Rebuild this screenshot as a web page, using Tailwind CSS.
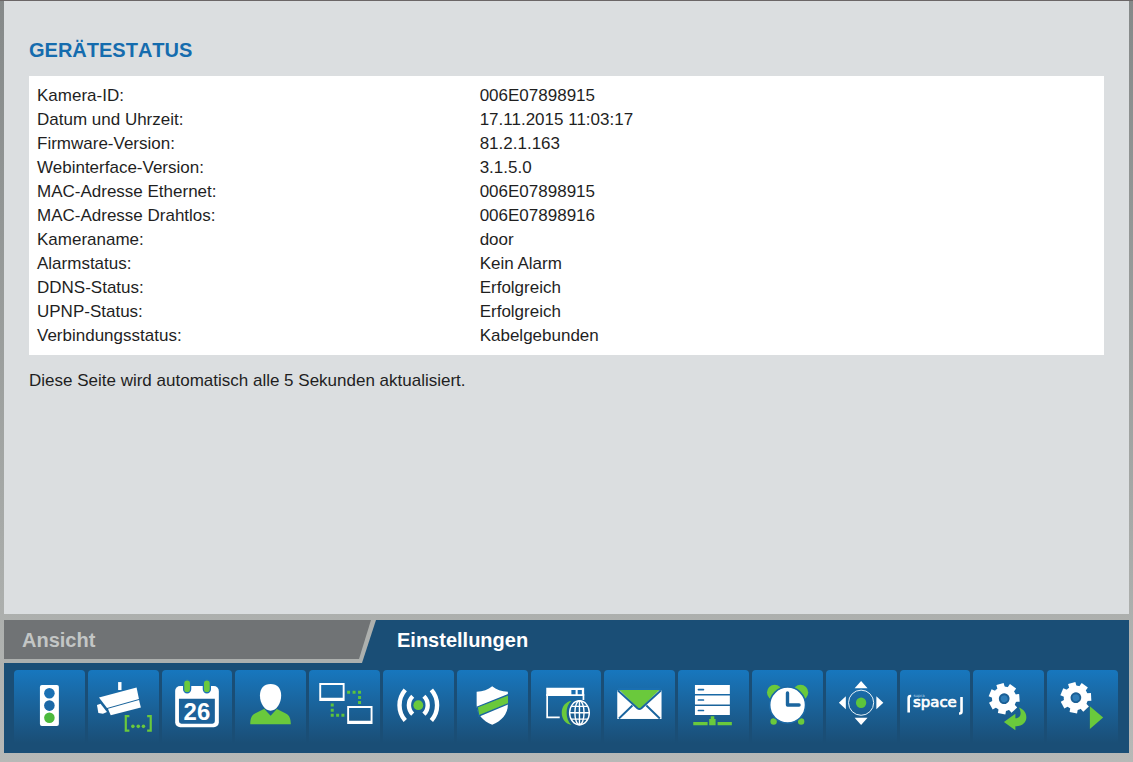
<!DOCTYPE html>
<html lang="de">
<head>
<meta charset="utf-8">
<meta name="viewport" content="width=device-width, initial-scale=1">
<title>Gerätestatus</title>
<script src="https://cdn.jsdelivr.net/npm/@tailwindcss/browser@4"></script>
</head>
<body class="flex min-h-screen flex-col border-t border-[#6b6667] bg-linear-to-b from-[#858989] from-0% via-[#a7aaa8] via-70% to-[#b7b9b7] px-1 pb-[9px] font-['Liberation_Sans',Arial,sans-serif] text-[17px] leading-6 text-[#1f1f1f]">
<svg class="hidden" aria-hidden="true">
  <symbol id="gear" viewBox="-16 -16 32 32">
    <g stroke="#fff" stroke-width="7.6">
      <path d="M0 0V-15.3"/>
      <path d="M0 0V-15.3" transform="rotate(51.43)"/>
      <path d="M0 0V-15.3" transform="rotate(102.86)"/>
      <path d="M0 0V-15.3" transform="rotate(154.29)"/>
      <path d="M0 0V-15.3" transform="rotate(205.71)"/>
      <path d="M0 0V-15.3" transform="rotate(257.14)"/>
      <path d="M0 0V-15.3" transform="rotate(308.57)"/>
    </g>
    <circle r="12.2" fill="#fff"/>
    <circle r="4.4" fill="#2f7db8" stroke="#1b5f95" stroke-width="2"/>
  </symbol>
</svg>

<main class="flex-1 bg-[#dbdee0] px-[25px] pt-[35px]">
  <h1 class="text-xl leading-7 font-bold text-[#156cae] [font-kerning:none]">GERÄTESTATUS</h1>
  <div class="mt-3 bg-white px-2 pt-2 pb-[7px]">
    <table class="w-full table-fixed text-left">
      <tbody>
        <tr><th scope="row" class="w-[41.8%] font-normal">Kamera-ID:</th><td>006E07898915</td></tr>
        <tr><th scope="row" class="font-normal">Datum und Uhrzeit:</th><td>17.11.2015 11:03:17</td></tr>
        <tr><th scope="row" class="font-normal">Firmware-Version:</th><td>81.2.1.163</td></tr>
        <tr><th scope="row" class="font-normal">Webinterface-Version:</th><td>3.1.5.0</td></tr>
        <tr><th scope="row" class="font-normal">MAC-Adresse Ethernet:</th><td>006E07898915</td></tr>
        <tr><th scope="row" class="font-normal">MAC-Adresse Drahtlos:</th><td>006E07898916</td></tr>
        <tr><th scope="row" class="font-normal">Kameraname:</th><td>door</td></tr>
        <tr><th scope="row" class="font-normal">Alarmstatus:</th><td>Kein Alarm</td></tr>
        <tr><th scope="row" class="font-normal">DDNS-Status:</th><td>Erfolgreich</td></tr>
        <tr><th scope="row" class="font-normal">UPNP-Status:</th><td>Erfolgreich</td></tr>
        <tr><th scope="row" class="font-normal">Verbindungsstatus:</th><td>Kabelgebunden</td></tr>
      </tbody>
    </table>
  </div>
  <p class="mt-3.5">Diese Seite wird automatisch alle 5 Sekunden aktualisiert.</p>
</main>

<footer class="mt-1.5 bg-[#1a4e76]">
  <div class="flex text-xl leading-10 font-bold">
    <div class="w-[372px] shrink-0 bg-[#adb0ae] pb-1 [clip-path:polygon(0_0,100%_0,calc(100%_-_14px)_100%,0_100%)]">
      <button type="button" class="block h-[39px] w-[367px] bg-[#707375] pl-[18px] text-left text-[#c3c6c5] [clip-path:polygon(0_0,100%_0,calc(100%_-_12px)_100%,0_100%)]">Ansicht</button>
    </div>
    <button type="button" class="h-[39px] pl-[21px] text-white">Einstellungen</button>
  </div>
  <nav class="flex gap-[3px] pt-[7px] pr-[11px] pb-2.5 pl-2.5" aria-label="Einstellungen">
    <button type="button" aria-label="Status" class="h-[73px] flex-1 rounded-t bg-linear-to-b from-[#1777be] to-[#1a4e76]">
      <svg viewBox="0 0 71 73" class="h-full w-full">
        <rect x="26" y="15" width="19" height="41" rx="2" fill="#fff"/>
        <circle cx="35.5" cy="23.3" r="5.3" fill="#1a70b3"/><circle cx="35.5" cy="35.6" r="5.3" fill="#1b68a6"/><circle cx="35.5" cy="47.8" r="5.3" fill="#4cb93c"/>
      </svg>
    </button>
    <button type="button" aria-label="Kamera" class="h-[73px] flex-1 rounded-t bg-linear-to-b from-[#1777be] to-[#1a4e76]">
      <svg viewBox="0 0 71 73" class="h-full w-full">
        <g fill="#fff"><path d="M30.2 12h3.4v8h-3.4z"/><path d="M11 27.4 48.7 17.400l2.400 11.500-32 9z"/><path d="m20 38.800 31.200-8.800 1.800 7.400L22.800 45.200z"/><path d="m9 35 3.600-1.200L19 42l-4 1.700-4.600-.8z"/></g>
        <g fill="none" stroke="#6ac93c" stroke-width="2.2"><path d="M41.5 46.2h-3.6v14.4h3.6M59.3 46.2h3.6v14.4h-3.6"/></g>
        <g fill="#6ac93c"><circle cx="45" cy="56.4" r="1.8"/><circle cx="50.4" cy="56.4" r="1.8"/><circle cx="55.6" cy="56.4" r="1.8"/></g>
      </svg>
    </button>
    <button type="button" aria-label="Datum" class="h-[73px] flex-1 rounded-t bg-linear-to-b from-[#1777be] to-[#1a4e76]">
      <svg viewBox="0 0 71 73" class="h-full w-full font-['Liberation_Sans_Narrow','Liberation_Sans',sans-serif]">
        <rect x="13.2" y="16" width="43.8" height="41.3" rx="5" fill="#fff"/>
        <path d="M17 28.7h36v22.6a2.5 2.5 0 0 1-2.5 2.5h-31a2.5 2.5 0 0 1-2.5-2.5z" fill="#1c629a"/>
        <g fill="#6ac93c" stroke="#1a72b5" stroke-width="1.3"><rect x="21.7" y="9.7" width="7" height="13" rx="3.5"/><rect x="41.5" y="9.7" width="7" height="13" rx="3.5"/></g>
        <text x="35" y="50" text-anchor="middle" font-size="24" font-weight="700" fill="#fff">26</text>
      </svg>
    </button>
    <button type="button" aria-label="Benutzer" class="h-[73px] flex-1 rounded-t bg-linear-to-b from-[#1777be] to-[#1a4e76]">
      <svg viewBox="0 0 71 73" class="h-full w-full">
        <path d="M15.3 54.4c0-7 1.8-9.6 5.7-11.5l9-4.3h11l9 4.3c4 1.900 6 4.500 6 11.500z" fill="#6ac93c"/>
        <path d="M29 38.5h13.400l-6.700 7.200z" fill="#1b5f96"/>
        <path d="M35.700 14c6.800 0 10.600 4.500 10.600 11.500 0 8-4.800 15.200-10.600 15.200S25 33.500 25 25.500C25 18.500 29 14 35.700 14z" fill="#fff"/>
      </svg>
    </button>
    <button type="button" aria-label="Netzwerk" class="h-[73px] flex-1 rounded-t bg-linear-to-b from-[#1777be] to-[#1a4e76]">
      <svg viewBox="0 0 71 73" class="h-full w-full">
        <path fill-rule="evenodd" fill="#fff" d="M10.300 13h25.400v18H10.300zM12.200 14.900v12.800h21.600V14.900zM38.300 36h25.400v18H38.300zM40.200 37.900v12.800h21.600V37.900z"/>
        <path d="M38.200 20.800h3v3h-3zM43.700 20.800h3v3h-3zM49.200 20.800h3v3h-3zM49.200 26h3v3h-3zM49.200 31h3v3h-3zM21.800 33.500h3v3h-3zM21.800 38.700h3v3h-3zM21.800 43.800h3v3h-3zM27.200 43.800h3v3h-3zM32.500 43.800h3v3h-3z" fill="#5cc43c"/>
      </svg>
    </button>
    <button type="button" aria-label="WLAN" class="h-[73px] flex-1 rounded-t bg-linear-to-b from-[#1777be] to-[#1a4e76]">
      <svg viewBox="0 0 71 73" class="h-full w-full">
        <circle cx="35.400" cy="35.200" r="4.900" fill="#6ac93c"/>
        <g fill="none" stroke="#fff" stroke-width="4.400"><path d="M29.800 26.200a12.500 12.500 0 0 0 0 18M41 26.200a12.500 12.500 0 0 1 0 18"/><path d="M22.300 19.800a23.500 23.500 0 0 0 0 30.800M48.500 19.800a23.500 23.500 0 0 1 0 30.800"/></g>
      </svg>
    </button>
    <button type="button" aria-label="Sicherheit" class="h-[73px] flex-1 rounded-t bg-linear-to-b from-[#1777be] to-[#1a4e76]">
      <svg viewBox="0 0 71 73" class="h-full w-full">
        <path d="M35.300 16.300c4 3.500 9.500 5.400 15.700 5.400v13c0 9.500-6.500 16.500-15.700 20-9.200-3.500-15.600-10.500-15.600-20v-13c6.200 0 11.600-1.900 15.600-5.400z" fill="#fff"/>
        <path d="m20.300 37 31.500-12.500v9L21.800 46z" fill="#6ac93c" stroke="#1b659f" stroke-width="1.300"/>
      </svg>
    </button>
    <button type="button" aria-label="Webzugriff" class="h-[73px] flex-1 rounded-t bg-linear-to-b from-[#1777be] to-[#1a4e76]">
      <svg viewBox="0 0 71 73" class="h-full w-full">
        <path d="M15.300 17.700h38V26h-38z" fill="#fff"/>
        <path d="M16.200 24v23.500h12.600M52.600 24v6" fill="none" stroke="#fff" stroke-width="1.700"/>
        <path d="M40.500 20h4.200v4.200h-4.200zM46.800 20H51v4.200h-4.200z" fill="#1a6eb0"/>
        <path d="M40.500 30.800c-6 1-9.700 6-9.700 12s3.700 11.200 9.700 12.200c-3.200-3-4.800-7.200-4.800-12.200s1.600-9 4.800-12z" fill="#6ac93c"/>
        <g fill="none" stroke="#fff" stroke-width="1.400"><ellipse cx="48.600" cy="42.800" rx="9.900" ry="12"/><ellipse cx="48.600" cy="42.800" rx="4.600" ry="12"/><path d="M48.600 30.800v24M38.700 42.800h19.800M40.500 36.400h16.200M40.500 49.200h16.200"/></g>
      </svg>
    </button>
    <button type="button" aria-label="E-Mail" class="h-[73px] flex-1 rounded-t bg-linear-to-b from-[#1777be] to-[#1a4e76]">
      <svg viewBox="0 0 71 73" class="h-full w-full">
        <rect x="13.300" y="20.500" width="44.400" height="28.500" fill="#fff"/>
        <path d="M14.500 19h42L37 38.300q-1.500 1.300-3 0z" fill="#6ac93c"/>
        <path d="M14 20.500 33.500 38.300q2 1.600 4 0L57 20.500M15 48.500l13.500-13M56 48.500l-13.500-13" fill="none" stroke="#1a659f" stroke-width="1.900"/>
        <path d="M14 18h43v2H14z" fill="#1a6fb1"/>
      </svg>
    </button>
    <button type="button" aria-label="FTP-Server" class="h-[73px] flex-1 rounded-t bg-linear-to-b from-[#1777be] to-[#1a4e76]">
      <svg viewBox="0 0 71 73" class="h-full w-full">
        <path d="M17 15h35v9H17zM17 25.500h35v9H17zM17 36h35v9H17z" fill="#fff"/>
        <path d="M20.500 19.500h5M20.500 30h5M20.500 40.500h5" stroke="#1a6aa8" stroke-width="1.700" stroke-linecap="round"/>
        <path d="M15.300 52h14.400v3.400H15.300zM39.700 52H54v3.400H39.700zM32.800 46.300h3.600V49h1.300v6.400h-6.400V49h1.500z" fill="#6ac93c"/>
      </svg>
    </button>
    <button type="button" aria-label="Alarm" class="h-[73px] flex-1 rounded-t bg-linear-to-b from-[#1777be] to-[#1a4e76]">
      <svg viewBox="0 0 71 73" class="h-full w-full">
        <g fill="#6ac93c"><circle cx="22.700" cy="22.500" r="7.700"/><circle cx="48.700" cy="22.500" r="7.700"/><circle cx="21.700" cy="51.600" r="3.200"/><circle cx="49.300" cy="51.600" r="3.200"/></g>
        <circle cx="35.700" cy="35" r="18" fill="#fff" stroke="#1b69a6" stroke-width="1.600"/>
        <path d="M35.600 23v12h11.600" fill="none" stroke="#1b659f" stroke-width="3.400" stroke-linecap="round" stroke-linejoin="round"/>
      </svg>
    </button>
    <button type="button" aria-label="Schwenken und Neigen" class="h-[73px] flex-1 rounded-t bg-linear-to-b from-[#1777be] to-[#1a4e76]">
      <svg viewBox="0 0 71 73" class="h-full w-full">
        <circle cx="35.200" cy="32.700" r="12.600" fill="none" stroke="#e4f1f8" stroke-width="1"/>
        <circle cx="35.200" cy="32.700" r="5.200" fill="#5cc43c"/>
        <path d="m35.200 11 6.500 7.200H28.700zM35.200 55l6.500-7.200H28.700zM12.900 32.700l7-6.500v13zM57.500 32.700l-7-6.500v13z" fill="#fff"/>
      </svg>
    </button>
    <button type="button" aria-label="Supra-Space" class="h-[73px] flex-1 rounded-t bg-linear-to-b from-[#1777be] to-[#1a4e76]">
      <svg viewBox="0 0 71 73" class="h-full w-full font-['DejaVu_Sans',sans-serif]">
        <path d="M11.200 26h-.5q-2 0-2 2v14.500M59.200 43.500h.5q2 0 2-2V27" fill="none" stroke="#fff" stroke-width="2.600"/>
        <text x="35" y="37.500" text-anchor="middle" font-size="15" fill="#fff" stroke="#fff" stroke-width=".7">space</text>
        <text x="13.500" y="27" font-size="4" fill="#b9d6ea">supra</text>
      </svg>
    </button>
    <button type="button" aria-label="Zurücksetzen" class="h-[73px] flex-1 rounded-t bg-linear-to-b from-[#1777be] to-[#1a4e76]">
      <svg viewBox="0 0 71 73" class="h-full w-full">
        <use href="#gear" x="-16" y="-16" width="32" height="32" transform="translate(31.300 28.700) rotate(-16)"/>
        <path d="M46 37.500c5 2 7.500 5.500 7.500 10 0 5-4 8.700-11 8.800v3.900L31 52l11.500-8.200v4.600c5-.2 7-4.700 3.500-10.900z" fill="#6ac93c"/>
      </svg>
    </button>
    <button type="button" aria-label="Neustart" class="h-[73px] flex-1 rounded-t bg-linear-to-b from-[#1777be] to-[#1a4e76]">
      <svg viewBox="0 0 71 73" class="h-full w-full">
        <use href="#gear" x="-16" y="-16" width="32" height="32" transform="translate(29 27.700) rotate(-16)"/>
        <path d="m43 36.300 13.300 11.200L43 59z" fill="#6ac93c"/>
      </svg>
    </button>
  </nav>
</footer>
</body>
</html>
